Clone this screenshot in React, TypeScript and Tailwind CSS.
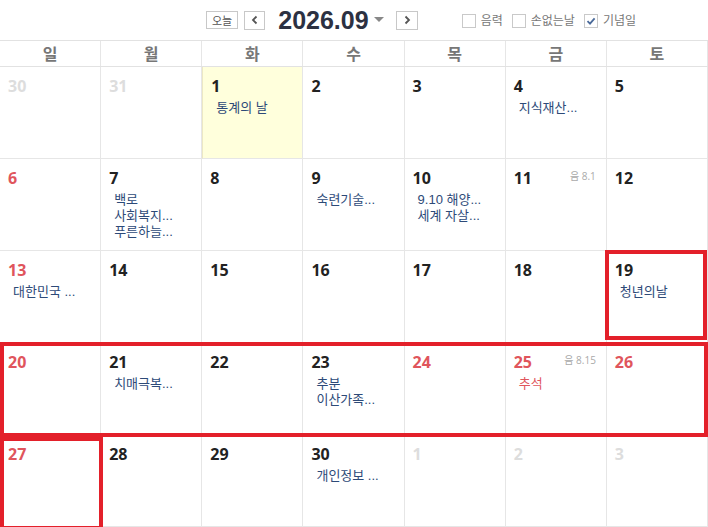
import React from "react";

type Day = {
  n: number;
  muted?: boolean;
  red?: boolean;
  today?: boolean;
  lunar?: string;
  events?: string[];
  holiday?: string;
  mark?: string;
};

const weeks: Day[][] = [
  [
    { n: 30, muted: true },
    { n: 31, muted: true },
    { n: 1, today: true, events: ["통계의 날"] },
    { n: 2 },
    { n: 3 },
    { n: 4, events: ["지식재산..."] },
    { n: 5 },
  ],
  [
    { n: 6, red: true },
    { n: 7, events: ["백로", "사회복지...", "푸른하늘..."] },
    { n: 8 },
    { n: 9, events: ["숙련기술..."] },
    { n: 10, events: ["9.10 해양...", "세계 자살..."] },
    { n: 11, lunar: "음 8.1" },
    { n: 12 },
  ],
  [
    { n: 13, red: true, events: ["대한민국 ..."] },
    { n: 14 },
    { n: 15 },
    { n: 16 },
    { n: 17 },
    { n: 18 },
    { n: 19, events: ["청년의날"], mark: "cell19" },
  ],
  [
    { n: 20, red: true },
    { n: 21, events: ["치매극복..."] },
    { n: 22 },
    { n: 23, events: ["추분", "이산가족..."] },
    { n: 24, red: true },
    { n: 25, red: true, lunar: "음 8.15", holiday: "추석" },
    { n: 26, red: true },
  ],
  [
    { n: 27, red: true, mark: "cell27" },
    { n: 28 },
    { n: 29 },
    { n: 30, events: ["개인정보 ..."] },
    { n: 1, muted: true },
    { n: 2, muted: true },
    { n: 3, muted: true },
  ],
];

const dayNames = ["일", "월", "화", "수", "목", "금", "토"];

const evFont = { fontFamily: '"Liberation Sans", "Noto Sans CJK KR", sans-serif' };

function Check({ label, checked }: { label: string; checked?: boolean }) {
  return (
    <label className="flex items-center gap-[5px]">
      <span className="w-[14px] h-[14px] border border-[#c9c9c9] bg-white flex items-center justify-center">
        {checked && (
          <svg width="10" height="10" viewBox="0 0 10 10">
            <path d="M1.5 5.2 L4 7.6 L8.6 2.4" fill="none" stroke="#4a6a9a" strokeWidth="1.8" />
          </svg>
        )}
      </span>
      <span className="text-[12px] text-[#777]">{label}</span>
    </label>
  );
}

function Cell({ d }: { d: Day }) {
  const numColor = d.muted ? "text-[#dddddd]" : d.red ? "text-[#e0555c]" : "text-[#222]";
  return (
    <div
      className={`relative h-[92px] border-r border-b border-[#e6e6e6] px-[8px] pt-[9px] ${
        d.today ? "bg-[#ffffdc] border-l border-l-[#ece8c4]" : "bg-white"
      }`}
    >
      <div className="flex items-start justify-between">
        <span className={`text-[16px] font-bold leading-[20px] ${numColor}`}>{d.n}</span>
        {d.lunar && <span className="text-[10px] text-[#aaa] leading-[16px] pr-[2px]">{d.lunar}</span>}
      </div>
      <div className="pl-[5px] pt-[4px]" style={evFont}>
        {d.events?.map((e) => (
          <div key={e} className="text-[13px] leading-[16px] text-[#2d4a78] whitespace-nowrap">
            {e}
          </div>
        ))}
        {d.holiday && <div className="text-[13px] leading-[16px] text-[#e0555c]">{d.holiday}</div>}
      </div>
      {d.mark === "cell19" && (
        <div className="absolute -left-[2px] -top-px right-0 bottom-[2px] border-4 border-[#e3202a] z-10" />
      )}
      {d.mark === "cell27" && (
        <div className="absolute left-0 top-[2px] -right-[3px] -bottom-[4px] border-4 border-[#e3202a] z-10" />
      )}
    </div>
  );
}

export default function App() {
  return (
    <div
      className="w-[708px] h-[527px] overflow-hidden bg-white"
      style={{ fontFamily: '"Open Sans", "Noto Sans CJK KR", sans-serif' }}
    >
      <div className="h-[40px] flex items-center relative">
        <div className="flex items-center ml-[206px]">
          <button className="h-[18px] px-[5px] border border-[#c8c8c8] text-[11px] text-[#555] leading-none">
            오늘
          </button>
          <button className="ml-[6px] w-[21px] h-[19px] border border-[#c8c8c8] flex items-center justify-center">
            <svg width="8" height="10" viewBox="0 0 8 10">
              <path d="M5.5 1.5 L2 5 L5.5 8.5" fill="none" stroke="#555" strokeWidth="1.8" />
            </svg>
          </button>
          <span
            className="ml-[13px] text-[25px] font-bold text-[#2c3142] leading-none"
            style={{ fontFamily: '"Liberation Sans", Arial, sans-serif' }}
          >
            2026.09
          </span>
          <svg className="ml-[5px]" width="10" height="6" viewBox="0 0 10 6">
            <path d="M0 0 L10 0 L5 5 Z" fill="#888" />
          </svg>
          <button className="ml-[12px] w-[22px] h-[19px] border border-[#c8c8c8] flex items-center justify-center">
            <svg width="8" height="10" viewBox="0 0 8 10">
              <path d="M2.5 1.5 L6 5 L2.5 8.5" fill="none" stroke="#555" strokeWidth="1.8" />
            </svg>
          </button>
        </div>
        <div className="flex items-center gap-[9px] ml-[44px] mt-[1px]">
          <Check label="음력" />
          <Check label="손없는날" />
          <Check label="기념일" checked />
        </div>
      </div>
      <div className="grid grid-cols-7 h-[27px] border-t border-b border-[#e2e2e2]">
        {dayNames.map((n) => (
          <div
            key={n}
            className="flex items-center justify-center border-r border-[#e6e6e6] text-[16px] font-bold text-[#777]"
          >
            {n}
          </div>
        ))}
      </div>
      {weeks.map((w, i) => (
        <div key={i} className="relative grid grid-cols-7">
          {w.map((d, j) => (
            <Cell key={j} d={d} />
          ))}
          {i === 3 && (
            <div className="absolute left-0 -top-px right-0 -bottom-[2px] border-4 border-[#e3202a] z-10" />
          )}
        </div>
      ))}
    </div>
  );
}
